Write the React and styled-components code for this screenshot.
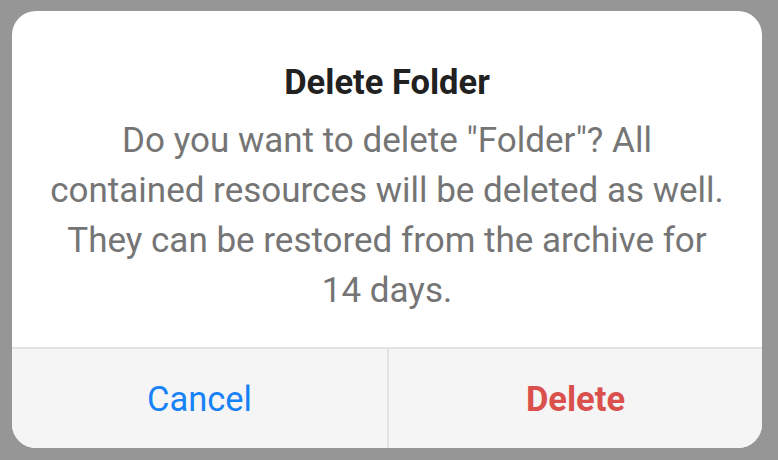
import React from "react";
import styled, { createGlobalStyle } from "styled-components";

const Global = createGlobalStyle`
  html, body { margin: 0; padding: 0; background: #969696; }
  body { font-family: Roboto, "Liberation Sans", Arial, sans-serif; }
  * { box-sizing: border-box; }
`;

const Backdrop = styled.div`
  width: 778px;
  height: 460px;
  background: #969696;
  padding: 11px 16px 12px 12px;
  display: flex;
  align-items: flex-start;
`;

const Dialog = styled.div`
  width: 750px;
  height: 437px;
  background: #ffffff;
  border-radius: 24px;
  overflow: hidden;
  display: flex;
  flex-direction: column;
`;

const Content = styled.div`
  flex: 1;
  padding: 47px 36px 0;
  text-align: center;
`;

const Title = styled.h2`
  margin: 0;
  font-size: 34.5px;
  line-height: 48px;
  font-weight: 700;
  color: #212121;
`;

const Message = styled.p`
  margin: 10px 0 0;
  font-size: 35px;
  line-height: 50px;
  font-weight: 400;
  color: #757575;
`;

const Actions = styled.div`
  display: grid;
  grid-template-columns: 1fr 1fr;
  height: 101px;
  border-top: 2px solid #e3e3e3;
  background: #f5f5f5;
`;

const ActionButton = styled.button`
  border: none;
  background: transparent;
  font-family: inherit;
  font-size: 34.5px;
  padding: 0;
  cursor: pointer;
  color: ${(p) => (p.$danger ? "#da504c" : "#1682f6")};
  font-weight: ${(p) => (p.$danger ? 700 : 400)};
  border-left: ${(p) => (p.$divider ? "2px solid #e3e3e3" : "none")};
  display: flex;
  align-items: center;
  justify-content: center;
`;

export default function App() {
  return (
    <>
      <Global />
      <Backdrop>
        <Dialog>
          <Content>
            <Title>Delete Folder</Title>
            <Message>
              Do you want to delete "Folder"? All contained resources will be
              deleted as well. They can be restored from the archive for 14
              days.
            </Message>
          </Content>
          <Actions>
            <ActionButton>Cancel</ActionButton>
            <ActionButton $danger $divider>
              Delete
            </ActionButton>
          </Actions>
        </Dialog>
      </Backdrop>
    </>
  );
}
